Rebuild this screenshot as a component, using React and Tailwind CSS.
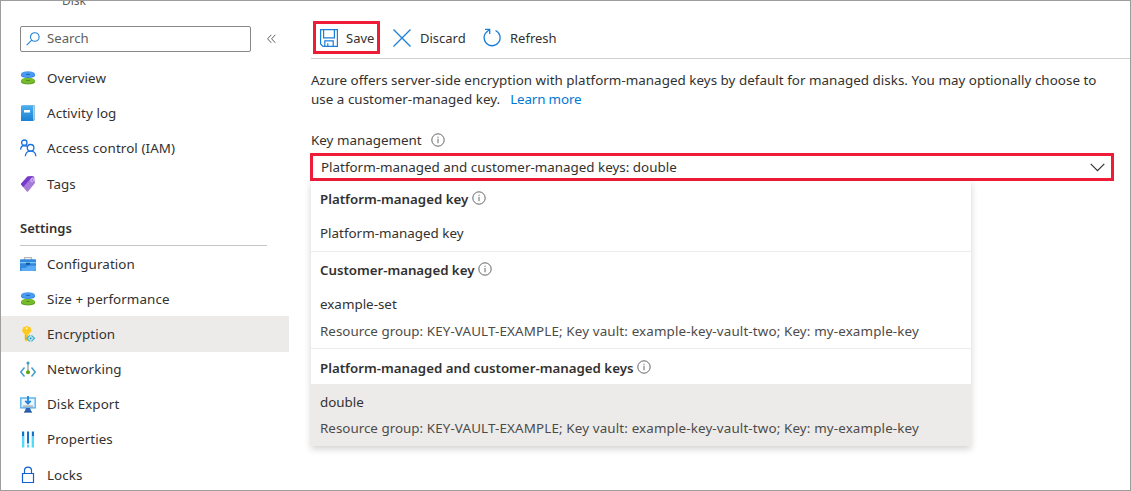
import React from "react";

function DiskIcon() {
  return (
    <svg width="16" height="16" viewBox="0 0 16 16">
      <path d="M1 10.500v1.500c0 3.200 14 3.200 14 0v-1.500z" fill="#5e9f24" />
      <ellipse cx="8" cy="10.500" rx="7" ry="2.900" fill="#76bc2d" />
      <ellipse cx="8" cy="10.500" rx="2.200" ry=".5" fill="#4d8a1c" />
      <path d="M1 4.200v1.300c0 3.200 14 3.200 14 0V4.200z" fill="#2a7fdc" />
      <ellipse cx="8" cy="4.200" rx="7" ry="3" fill="#4a9af0" />
      <ellipse cx="8" cy="4.300" rx="2.200" ry=".5" fill="#1459a8" />
    </svg>
  );
}

function LogIcon() {
  return (
    <svg width="16" height="18" viewBox="0 0 16 18">
      <defs>
        <linearGradient id="book" x1="0" y1="0" x2="0" y2="1">
          <stop offset="0" stopColor="#4bb0ee" />
          <stop offset="1" stopColor="#1b80d2" />
        </linearGradient>
      </defs>
      <rect x="2" y="1" width="13" height="15.500" rx="1" fill="#6aa5d0" />
      <rect x="2" y="1.600" width="12.400" height="14" fill="#d8ecf8" />
      <rect x="1" y="1.600" width="12.300" height="15.400" rx=".6" fill="url(#book)" />
      <rect x="4" y="6" width="6" height="2.500" fill="#fff" />
    </svg>
  );
}

function PeopleIcon() {
  return (
    <svg width="17" height="18" viewBox="0 0 17 18" fill="none" stroke="#1a73dc" strokeWidth="1.300">
      <circle cx="4.300" cy="3.700" r="2.700" />
      <path d="M.6 10.600C.8 8 2.200 6.600 4.200 6.500c1.200 0 2 .3 2.700 1" />
      <circle cx="10.600" cy="8.800" r="3.300" />
      <path d="M5.300 17.200c.3-3.300 2.200-5 5.300-5s5 1.700 5.300 5" />
    </svg>
  );
}

function TagIcon() {
  return (
    <svg width="16" height="18" viewBox="0 0 16 18">
      <path d="M7.500 1.500 13 1q1 0 1.200 1l.8 6-7 8.500q-.6.600-1.200 0L1.200 9.800q-.5-.6 0-1.200z" fill="#a57bda" />
      <path d="M7.500 1.500 13 1 3.200 12 1.200 9.800q-.5-.6 0-1.200z" fill="#7738ce" />
      <path d="M11.700 6.800c-2.200-2.800.500-4.500 1.800-2.400.5 1.200-.2 1.900-1 2.200" fill="none" stroke="#e2cff5" strokeWidth="1" />
    </svg>
  );
}

function ToolboxIcon() {
  return (
    <svg width="16" height="16" viewBox="0 0 16 16">
      <path d="M4.500 4V1.600h7V4" fill="none" stroke="#b9b9b9" strokeWidth="1.200" />
      <rect x="0" y="3.200" width="16" height="11.800" rx=".5" fill="#3388de" />
      <path d="M0 6.200h16v1H0z" fill="#8edcf8" />
      <path d="M1.500 15V12H5l4-2.200h7v4L14.500 15z" fill="#5aacf5" />
      <rect x="6" y="6.800" width="4" height="2" fill="#0f559d" />
    </svg>
  );
}

function KeyIcon() {
  return (
    <svg width="16" height="18" viewBox="0 0 16 18">
      <path d="M6.500 1 10.500 2.200 11.600 6 8.600 9.300V10l-1 .9 1 1-1.100 1.200 1.100 1.300L6.800 16.600 4.700 15V9.300L2 6.300 3 2.400z" fill="#fcca1e" />
      <path d="M5.500 10v5" stroke="#e3a900" strokeWidth=".9" />
      <circle cx="6.600" cy="3.300" r="1.100" fill="#fff3b0" />
      <path d="m10.500 9.500 4.300 3.800-4.300 3.700-4-3.700z" fill="#b4e5ef" />
      <path d="m9.800 10.300-3 3 3 3M11.500 10.300l3 3-3 3" fill="none" stroke="#3badd0" strokeWidth="1.100" />
      <circle cx="10.600" cy="13.300" r=".9" fill="#278ab5" />
    </svg>
  );
}

function NetworkIcon() {
  return (
    <svg width="16" height="17" viewBox="0 0 16 17" fill="none">
      <path d="M4.500 6.500.8 11l3.700 4.500M11.500 6.500l3.700 4.500-3.700 4.500" stroke="#3c9ccc" strokeWidth="1.400" />
      <path d="M8 3v8" stroke="#a9a9a9" strokeWidth="1.500" />
      <circle cx="8" cy="2" r="1.500" fill="#2e9ac5" />
      <circle cx="8" cy="11.200" r="2" fill="#5ea60a" />
    </svg>
  );
}

function ExportIcon() {
  return (
    <svg width="16" height="17" viewBox="0 0 16 17">
      <rect x=".8" y="2" width="14.400" height="9.800" fill="#e8f6ff" stroke="#66baf0" strokeWidth="1.600" />
      <path d="M3 9.300h10v1.800H3z" fill="#b5b9bd" />
      <path d="M8 0v7M5.300 4.800 8 7.600l2.700-2.800" fill="none" stroke="#2684d5" strokeWidth="1.800" />
      <path d="M6 12h4l1.500 4h-7z" fill="#2b63b5" />
      <path d="M4 15.600h8v1H4z" fill="#1a4a94" />
    </svg>
  );
}

function PropertiesIcon() {
  return (
    <svg width="16" height="17" viewBox="0 0 16 17">
      <path d="M2 .5h2v5H2zM12 .5h2v5h-2zM7 .5h2v12H7z" fill="#0f74d1" />
      <path d="M2 6h2v10.500H2zM12 6h2v10.500h-2zM7 13.500h2v3H7z" fill="#50dcf8" />
      <path d="M4 .5h.8v16H4zM11.200.5h.8v16h-.8z" fill="#bfe9fa" />
    </svg>
  );
}

function LockIcon() {
  return (
    <svg width="16" height="18" viewBox="0 0 16 18" fill="none" stroke="#155fd6" strokeWidth="1.200">
      <path d="M2.500 7.500h11v9h-11zM4.500 7.500V4.600a3.500 3.500 0 0 1 7 0v2.900" />
    </svg>
  );
}

function InfoIcon({ className = "" }) {
  return (
    <svg className={className} width="14" height="14" viewBox="0 0 14 14" fill="none" stroke="#555" strokeWidth=".9">
      <circle cx="7" cy="7" r="6.200" />
      <path d="M7 5.800v4.400M7 3.700v1.100" />
    </svg>
  );
}

function NavItem({ icon: Icon, label, active }) {
  return (
    <div className={"flex h-[35.2px] w-[288px] shrink-0 items-center pl-[19px] " + (active ? "bg-[#edebe9]" : "")}>
      <span className="flex w-[27px] shrink-0 items-center">
        <Icon />
      </span>
      <span className="whitespace-nowrap pt-px tracking-[0.08px]">{label}</span>
    </div>
  );
}

function Resource() {
  return (
    <span className="whitespace-nowrap tracking-[0.135px] text-[#4c4b49]">
      <span className="tracking-normal">Resource group:</span> KEY-VAULT-EXAMPLE; Key vault: example-key-vault-two; Key: my-example-key
    </span>
  );
}

export default function App() {
  return (
    <div className="flex h-[491px] w-[1131px] overflow-hidden border border-[#9d9d9d] bg-white font-['Noto_Sans',sans-serif] text-[13.4px] leading-[19px] text-[#323130]">
      <aside className="flex w-[288px] shrink-0 flex-col">
        <div className="flex h-[25px] shrink-0 items-start">
          <span className="-mt-[9px] pl-[61px] text-[12px] leading-[17px] text-[#605e5c]">Disk</span>
        </div>
        <div className="flex shrink-0 items-center pl-[19px]">
          <div className="flex h-[26px] w-[231px] items-center rounded-[2px] border border-[#8a8886] pl-[5px] text-[13.2px] text-[#605e5c]">
            <svg width="14" height="14" viewBox="0 0 14 14" fill="none" stroke="#1c7fd6" strokeWidth="1.100">
              <circle cx="8.800" cy="5" r="4.300" />
              <path d="m5.700 8.200-5 5" />
            </svg>
            <span className="ml-[7px] pb-[2px]">Search</span>
          </div>
          <svg className="ml-[16px]" width="9" height="10" viewBox="0 0 9 10" fill="none" stroke="#605e5c" strokeWidth="1">
            <path d="M4.300.8.600 4.800l3.700 4M8.300.8l-3.700 4 3.700 4" />
          </svg>
        </div>
        <nav className="mt-[8.500px] flex shrink-0 flex-col">
          <NavItem icon={DiskIcon} label="Overview" />
          <NavItem icon={LogIcon} label="Activity log" />
          <NavItem icon={PeopleIcon} label="Access control (IAM)" />
          <NavItem icon={TagIcon} label="Tags" />
        </nav>
        <div className="ml-[19px] mt-[8.700px] flex h-[36px] w-[247px] shrink-0 items-center border-b border-[#c8c6c4] pt-[3px] text-[13px] font-semibold">
          <span>Settings</span>
        </div>
        <nav className="flex shrink-0 flex-col">
          <NavItem icon={ToolboxIcon} label="Configuration" />
          <NavItem icon={DiskIcon} label="Size + performance" />
          <NavItem icon={KeyIcon} label="Encryption" active />
          <NavItem icon={NetworkIcon} label="Networking" />
          <NavItem icon={ExportIcon} label="Disk Export" />
          <NavItem icon={PropertiesIcon} label="Properties" />
          <NavItem icon={LockIcon} label="Locks" />
        </nav>
      </aside>

      <main className="flex min-w-0 grow flex-col pl-[22px]">
        <div className="flex h-[58px] shrink-0 items-center border-b border-[#d2d0ce] pt-[16px] text-[13px]">
          <div className="ml-[2px] flex h-[33px] w-[67px] items-center border-3 border-[#ef1c38] pl-[4px]">
            <svg width="18" height="18" viewBox="0 0 18 18" fill="none" stroke="#1c7fd6" strokeWidth="1.200">
              <path d="M.6.600h16.800v16.800H3L.6 15zM3.600.600v8.200h10.800V.600M4.800 17.400v-5.500h8.400v5.500M7.800 17.400v-3.200" />
            </svg>
            <span className="ml-[8px] pt-px">Save</span>
          </div>
          <svg className="ml-[13px]" width="18" height="18" viewBox="0 0 18 18" fill="none" stroke="#1c7fd6" strokeWidth="1.300">
            <path d="m.5.500 17 17M17.500.500l-17 17" />
          </svg>
          <span className="ml-[9px] w-[63px] pt-[2px]">Discard</span>
          <svg width="18" height="19" viewBox="0 0 18 19" fill="none" stroke="#1c7fd6" strokeWidth="1.300">
            <path d="M12.500 2.500A8 8 0 1 1 4.800 3L6.600 1.500M2 1.300h4.700v4.700" />
          </svg>
          <span className="ml-[9px] pt-[2px]">Refresh</span>
        </div>

        <div className="mt-[12px] shrink-0 whitespace-nowrap tracking-[0.03px]">
          <p>Azure offers server-side encryption with platform-managed keys by default for managed disks. You may optionally choose to</p>
          <p>
            use a customer-managed key.<span className="ml-[10px] tracking-[-0.15px] text-[#0078d4]">Learn more</span>
          </p>
        </div>

        <div className="mt-[22px] flex shrink-0 items-center">
          <span>Key management</span>
          <InfoIcon className="ml-[9px] -mt-[2px]" />
        </div>
        <div className="mt-[3px] -ml-px flex h-[28px] w-[804px] shrink-0 items-center justify-between border-3 border-[#ef1c38] pl-[8px] pr-[6px]">
          <span>Platform-managed and customer-managed keys: double</span>
          <svg width="15" height="9" viewBox="0 0 15 9" fill="none" stroke="#323130" strokeWidth="1.200">
            <path d="m.7.900 6.800 6.800L14.300.900" />
          </svg>
        </div>

        <div className="flex h-[265px] w-[660px] shrink-0 flex-col shadow-[0_3px_7px_rgba(0,0,0,0.18)]">
          <section className="flex h-[71px] flex-col border-b border-[#edebe9] pl-[9px]">
            <div className="mt-[9px] flex items-center text-[13.3px]">
              <b className="font-semibold">Platform-managed key</b>
              <InfoIcon className="ml-[4px] -mt-[3px]" />
            </div>
            <span className="mt-[15px]">Platform-managed key</span>
          </section>
          <section className="flex h-[97px] flex-col border-b border-[#edebe9] pl-[9px]">
            <div className="mt-[9px] flex items-center text-[13.3px]">
              <b className="font-semibold tracking-[-0.03px]">Customer-managed key</b>
              <InfoIcon className="ml-[4px] -mt-[3px]" />
            </div>
            <span className="mt-[15px]">example-set</span>
            <span className="mt-[8px] flex"><Resource /></span>
          </section>
          <section className="flex grow flex-col">
            <div className="flex h-[35px] items-center pl-[9px] pt-[3px] text-[13.3px]">
              <b className="font-semibold">Platform-managed and customer-managed keys</b>
              <InfoIcon className="ml-[3px] -mt-[3px]" />
            </div>
            <div className="flex grow flex-col bg-[#edebe9] pl-[9px] pt-[9px]">
              <span>double</span>
              <span className="mt-[7px] flex"><Resource /></span>
            </div>
          </section>
        </div>
      </main>
    </div>
  );
}
